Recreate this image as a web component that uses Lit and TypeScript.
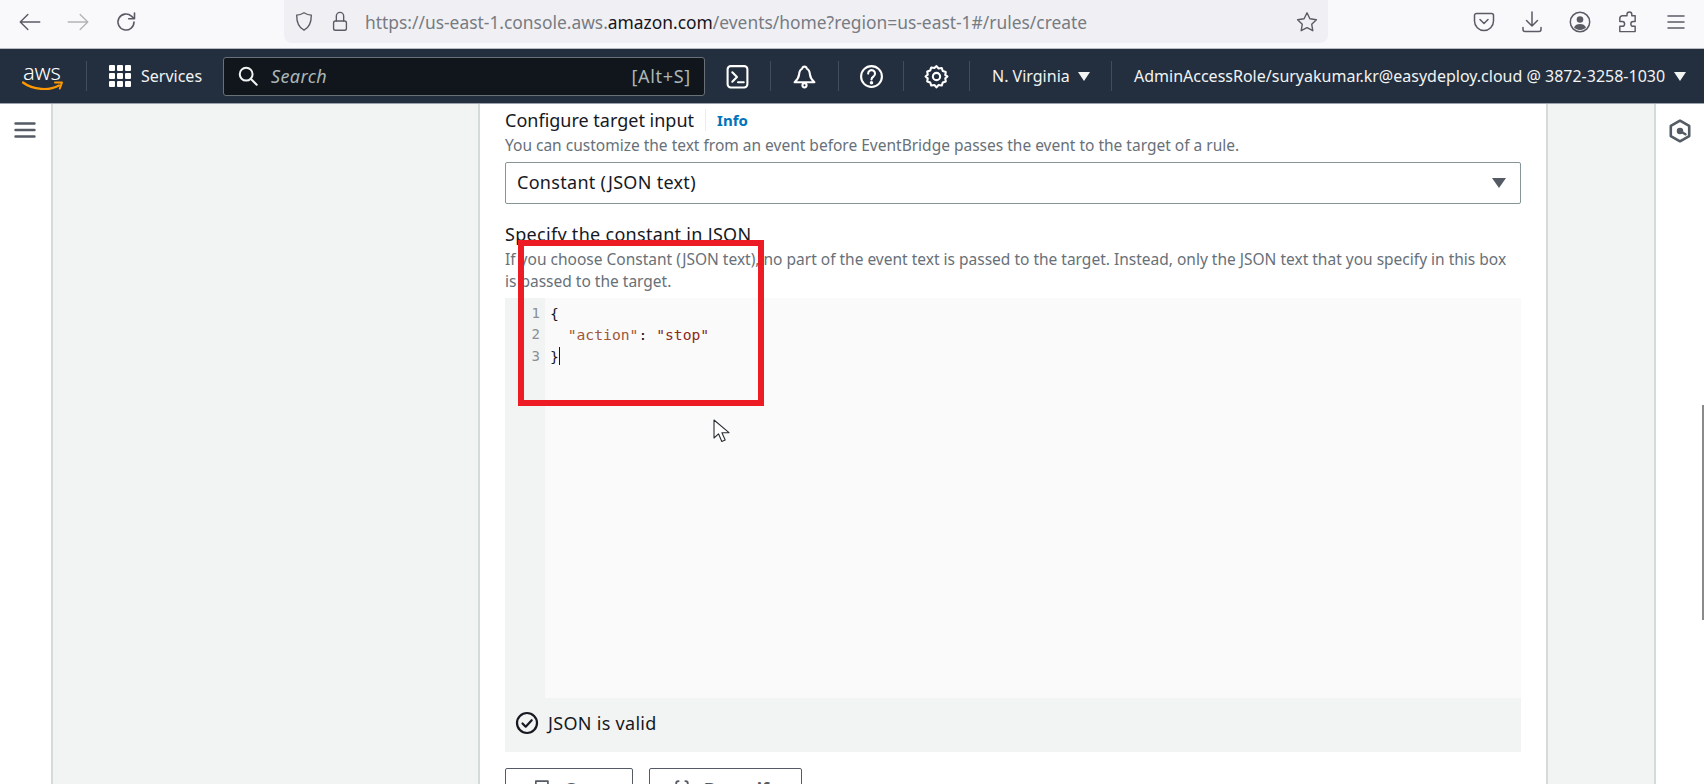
import { LitElement, html, css, svg } from "lit";
import { customElement } from "lit/decorators.js";

const ic = (size: number, body: unknown, stroke = "currentColor", sw = 1.6) => html`<svg width=${size} height=${size} viewBox="0 0 24 24" fill="none" stroke=${stroke} stroke-width=${sw} stroke-linecap="round" stroke-linejoin="round">${body}</svg>`;

@customElement("app-root")
export class AppRoot extends LitElement {
  static styles = css`
    :host { display: block; width: 1704px; height: 784px; overflow: hidden; position: relative; background: #fff; font-family: "Noto Sans", "Open Sans", sans-serif; color: #16191f; }
    * { box-sizing: border-box; }
    .browser { height: 49px; background: #f9f9fb; border-bottom: 1px solid #b8bcc0; display: flex; align-items: flex-start; padding-left: 6px; color: #5b5b66; }
    .bslot { width: 48px; height: 44px; display: flex; align-items: center; justify-content: center; flex: none; }
    .bslot.off { color: #b4b4b9; }
    .url { margin-left: 134px; width: 1044px; height: 43px; flex: none; background: #f0f0f4; border-radius: 0 0 8px 8px; display: flex; align-items: center; padding-left: 9px; padding-right: 9px; }
    .url .i1 { width: 22px; margin-right: 14px; display: flex; justify-content: center; }
    .url .i2 { width: 22px; display: flex; justify-content: center; margin-right: 14px; }
    .url-text { font-size: 17.4px; color: #777b82; white-space: nowrap; flex: 1; }
    .url-text b { font-weight: 400; color: #15141a; }
    .browser-right { margin-left: 132px; display: flex; }

    .nav { height: 55px; background: #232f3e; border-bottom: 1px solid #9aa3ab; display: flex; align-items: center; color: #f2f3f3; font-size: 16px; }
    .logo { width: 86px; height: 54px; padding-left: 22px; display: flex; flex-direction: column; justify-content: center; color: #fff; flex: none; }
    .logo span { font-size: 22px; font-weight: 300; line-height: 20px; letter-spacing: -0.2px; margin-left: 1px; }
    .logo svg { display: block; margin-top: -1px; }
    .sep { width: 1px; height: 30px; background: #414d5c; flex: none; }
    .grid { margin-left: 22px; width: 22px; display: grid; grid-template-columns: repeat(3, 6px); gap: 2px; flex: none; }
    .grid i { width: 6px; height: 6px; background: #fff; border-radius: 1px; display: block; }
    .services { margin-left: 10px; width: 82px; white-space: nowrap; flex: none; padding-bottom: 1px; }
    .search { width: 482px; height: 39px; background: #11161d; border: 1px solid #687078; border-radius: 3px; display: flex; align-items: center; padding: 0 13px 1px 13px; flex: none; color: #aab7b8; font-size: 18px; }
    .search svg { color: #f2f3f3; flex: none; }
    .search em { margin-left: 12px; flex: 1; letter-spacing: .4px; }
    .search span { letter-spacing: .7px; }
    .slot { width: 65px; display: flex; justify-content: center; align-items: center; flex: none; color: #fff; }
    .slot.w { width: 67px; }
    .slot.s { width: 64px; }
    .region { width: 141px; padding-left: 22px; display: flex; align-items: center; flex: none; white-space: nowrap; }
    .caret { width: 0; height: 0; border-left: 6px solid transparent; border-right: 6px solid transparent; border-top: 9px solid #f2f3f3; flex: none; }
    .region .caret { margin-left: 8px; }
    .acct { padding-left: 22px; display: flex; align-items: center; white-space: nowrap; flex: none; }
    .acct .caret { margin-left: 9px; }

    .main { display: grid; grid-template-columns: 53px 425px 1070px 106px 50px; height: 680px; }
    .side { display: flex; justify-content: center; padding-top: 14px; color: #545b64; height: 680px; }
    .side.l { border-right: 2px solid #d5dbdb; padding-right: 2px; }
    .side.r { border-left: 2px solid #d5dbdb; }
    .gutter { background: #f2f3f3; }
    .card { background: #fff; border-left: 2px solid #d5dbdb; border-right: 2px solid #d5dbdb; padding: 4px 25px 0 25px; }
    .title { display: flex; align-items: center; height: 24px; font-size: 18px; line-height: 24px; }
    .title .info { margin-left: 11px; padding-left: 11px; border-left: 1px solid #eaeded; font-size: 15px; font-weight: 700; color: #0073bb; height: 22px; line-height: 22px; }
    .desc { font-size: 15.5px; line-height: 21.5px; color: #687078; }
    .desc.first { margin-top: 3px; }
    .select { margin-top: 5px; height: 42px; border: 1px solid #879596; border-radius: 2px; display: flex; align-items: center; justify-content: space-between; padding: 0 14px 2px 11px; font-size: 18px; letter-spacing: .3px; }
    .select .caret { border-left-width: 7px; border-right-width: 7px; border-top: 10px solid #545b64; margin-top: 2px; }
    .label { margin-top: 18px; font-size: 18px; letter-spacing: .3px; line-height: 24px; }
    .desc.second { margin-top: 3.500px; }
    .editor { margin-top: 5.500px; display: grid; grid-template-columns: 40px 1fr; height: 400px; background: #f2f3f3; }
    .nums, .code { font-family: "DejaVu Sans Mono", "Liberation Mono", monospace; font-size: 14.7px; line-height: 21.6px; padding-top: 5px; }
    .nums { color: #8a8f94; text-align: right; padding-right: 5px; font-size: 14px; }
    .code { background: #fafafa; padding-left: 5px; white-space: pre; color: #16191f; }
    .code .k { color: #a0573a; }
    .code .s { color: #8c2a22; }
    .cursor { display: inline-block; width: 1px; height: 18px; background: #16191f; vertical-align: -3px; }
    .status { height: 54px; background: #f2f3f3; display: flex; align-items: center; padding: 0 0 3px 10px; font-size: 18px; letter-spacing: .3px; color: #16191f; gap: 9px; }
    .btns { margin-top: 16px; display: flex; gap: 16px; }
    .btn { height: 42px; border: 1px solid #545b64; border-radius: 2px; display: flex; align-items: flex-start; justify-content: center; padding-top: 9px; font-size: 18px; line-height: 22px; font-weight: 700; color: #545b64; }
    .btn svg { margin-top: 1px; flex: none; }
    .btn.c { width: 128px; gap: 14px; }
    .btn.b { width: 153px; gap: 12px; }
    .mark { position: absolute; left: 518px; top: 240px; width: 246px; height: 166px; border: 6px solid #ed1c24; pointer-events: none; }
    .pointer { position: absolute; left: 713px; top: 419px; }
    .bar { position: absolute; left: 1702px; top: 405px; width: 2px; height: 215px; background: #8a8a8a; }
  `;

  render() {
    return html`
      <div class="browser">
        <div class="bslot">${ic(26, svg`<path d="M21 12H3.500M10 5l-7 7 7 7"/>`, "currentColor", 1.3)}</div>
        <div class="bslot off">${ic(26, svg`<path d="M3 12h17.500M14 5l7 7-7 7"/>`, "currentColor", 1.3)}</div>
        <div class="bslot">${ic(24, svg`<path d="M20 12a8 8 0 1 1-2.600-5.900L20 8.500M20.500 3v5.800h-5.800"/>`, "currentColor", 1.6)}</div>
        <div class="url">
          <div class="i1">${ic(25, svg`<path d="M12 2.500c2.800 1.800 5.500 2.500 8 2.500 0 8-1.500 13.500-8 16.500C5.500 18.500 4 13 4 5c2.500 0 5.200-.7 8-2.500z"/>`, "currentColor", 1.5)}</div>
          <div class="i2">${ic(25, svg`<rect x="5" y="11.500" width="14" height="10" rx="2"/><path d="M8 11.500V6a4 4 0 0 1 8 0v5.500"/>`, "currentColor", 1.5)}</div>
          <div class="url-text">https://us-east-1.console.aws.<b>amazon.com</b>/events/home?region=us-east-1#/rules/create</div>
          ${ic(24, svg`<path d="M12 2.800l2.900 6 6.500.9-4.700 4.500 1.100 6.500-5.800-3.100-5.800 3.100 1.100-6.500L2.600 9.700l6.500-.9z"/>`, "currentColor", 1.4)}
        </div>
        <div class="browser-right">
          <div class="bslot">${ic(24, svg`<path d="M4.500 3.500h15a2 2 0 0 1 2 2v5.500a9.500 9.500 0 0 1-19 0V5.500a2 2 0 0 1 2-2z"/><path d="M8 9.500l4 4 4-4"/>`, "currentColor", 1.5)}</div>
          <div class="bslot">${ic(24, svg`<path d="M12 2v14M6.500 10.500L12 16l5.500-5.500M3 17.500v2a2 2 0 0 0 2 2h14a2 2 0 0 0 2-2v-2"/>`, "currentColor", 1.5)}</div>
          <div class="bslot">${ic(24, svg`<circle cx="12" cy="12" r="9.700"/><circle cx="12" cy="9.500" r="3.300" fill="currentColor" stroke="none"/><path d="M6 17.500c1-2.500 3.200-3.500 6-3.500s5 1 6 3.500c-1.500 1.500-3.500 2.500-6 2.500s-4.500-1-6-2.500z" fill="currentColor" stroke="none"/>`, "currentColor", 1.5)}</div>
          <div class="bslot">${ic(24, svg`<path d="M10 5.500h2.500V4a2.500 2.500 0 0 1 5 0v1.500H21v6h-2a2.500 2.500 0 0 0 0 5h2V22H5v-5.500h2.500a2.500 2.500 0 0 0 0-5H5V8.500a3 3 0 0 1 3-3z" transform="translate(-1 0.500) scale(.96)"/>`, "currentColor", 1.5)}</div>
          <div class="bslot">${ic(24, svg`<path d="M4 6h16M4 12h16M4 18h16"/>`, "currentColor", 1.5)}</div>
        </div>
      </div>

      <div class="nav">
        <div class="logo">
          <span>aws</span>
          <svg width="42" height="12" viewBox="0 0 42 12" fill="none"><path d="M1 2.500C11 10 27 11 37 5.500" stroke="#f90" stroke-width="2.200" stroke-linecap="round"/><path d="M33 2.500h7l-2.200 6" stroke="#f90" stroke-width="2" stroke-linecap="round" stroke-linejoin="round"/></svg>
        </div>
        <div class="sep"></div>
        <div class="grid">${Array.from({ length: 9 }, () => html`<i></i>`)}</div>
        <div class="services">Services</div>
        <div class="search">
          ${ic(22, svg`<circle cx="10" cy="10" r="7"/><path d="M15.500 15.500L21.500 21.500"/>`, "currentColor", 2.2)}
          <em>Search</em><span>[Alt+S]</span>
        </div>
        <div class="slot">${ic(25, svg`<rect x="2.500" y="2" width="19" height="20.500" rx="3"/><path d="M7 8l4.500 4.500L7 17M12.500 17.500H18"/>`, "currentColor", 2)}</div>
        <div class="sep"></div>
        <div class="slot w">${ic(25, svg`<path d="M12 2.500c-1.300 0-2 .9-2.200 1.900C7.500 5.500 7 7.500 6.800 10c-.2 2.500-1.500 5-4.300 7.500h19c-2.800-2.500-4.100-5-4.300-7.500-.2-2.500-.7-4.500-3-5.600-.2-1-.9-1.900-2.200-1.900z"/><circle cx="12" cy="20.500" r="2"/>`, "currentColor", 2)}</div>
        <div class="sep"></div>
        <div class="slot s">${ic(25, svg`<circle cx="12" cy="12" r="10"/><path d="M8.800 9.200a3.300 3.300 0 1 1 5.200 2.700c-1.300.9-2 1.500-2 3"/><circle cx="12" cy="18" r=".7" fill="currentColor"/>`, "currentColor", 2)}</div>
        <div class="sep"></div>
        <div class="slot">${ic(25, svg`<path d="M12 2l2 2.300 3-.5 1 2.900 2.900 1-.5 3L22.500 12l-2.100 1.800.5 3-2.900 1-1 2.900-3-.5L12 22.500l-2-2.300-3 .5-1-2.900-2.900-1 .5-3L1.500 12l2.100-1.800-.5-3 2.900-1 1-2.900 3 .5z"/><circle cx="12" cy="12" r="3.500"/>`, "currentColor", 2)}</div>
        <div class="sep"></div>
        <div class="region">N. Virginia<span class="caret"></span></div>
        <div class="sep"></div>
        <div class="acct">AdminAccessRole/suryakumar.kr@easydeploy.cloud @ 3872-3258-1030<span class="caret"></span></div>
      </div>

      <div class="main">
        <div class="side l">${ic(24, svg`<path d="M2.500 5.500h19M2.500 12h19M2.500 18.500h19"/>`, "#545b64", 2.400)}</div>
        <div class="gutter"></div>
        <div class="card">
          <div class="title">Configure target input<span class="info">Info</span></div>
          <div class="desc first">You can customize the text from an event before EventBridge passes the event to the target of a rule.</div>
          <div class="select">Constant (JSON text)<span class="caret"></span></div>
          <div class="label">Specify the constant in JSON</div>
          <div class="desc second">If you choose Constant (JSON text), no part of the event text is passed to the target. Instead, only the JSON text that you specify in this box is passed to the target.</div>
          <div class="editor">
            <div class="nums">1<br />2<br />3</div>
            <div class="code">{
  <span class="k">"action"</span>: <span class="s">"stop"</span>
}<span class="cursor"></span></div>
          </div>
          <div class="status">
            ${ic(24, svg`<circle cx="12" cy="12" r="10"/><path d="M7.500 12.500l3.200 3.200 6-6.500"/>`, "#16191f", 2.200)}
            <span>JSON is valid</span>
          </div>
          <div class="btns">
            <div class="btn c">${ic(20, svg`<path d="M7 7V2.500h14.500V15H17"/><rect x="2.500" y="7" width="14.500" height="14.500" fill="currentColor"/>`, "currentColor", 2)}<span>Copy</span></div>
            <div class="btn b">${ic(20, svg`<path d="M8 2.500C5 2.500 5 4 5 7s0 4-2.500 5C5 13 5 14 5 17s0 4.500 3 4.500M16 2.500c3 0 3 1.500 3 4.500s0 4 2.500 5C19 13 19 14 19 17s0 4.500-3 4.500"/>`, "currentColor", 2.200)}<span>Beautify</span></div>
          </div>
        </div>
        <div class="gutter"></div>
        <div class="side r">${ic(26, svg`<path d="M12 2.500l8.500 4.800v9.400L12 21.500l-8.500-4.800V7.300z"/><circle cx="12" cy="12" r="3" fill="#545b64" stroke="none"/><path d="M12 12l5 3"/>`, "#545b64", 2.400)}</div>
      </div>

      <div class="mark"></div>
      <svg class="pointer" width="18" height="26" viewBox="0 0 18 26" fill="#fff" stroke="#2a2e33" stroke-width="1.100" stroke-linejoin="round"><path d="M1 1v18l4.500-4.200 3.300 7.700 3.400-1.500-3.300-7.300H16z"/></svg>
      <div class="bar"></div>
    `;
  }
}
